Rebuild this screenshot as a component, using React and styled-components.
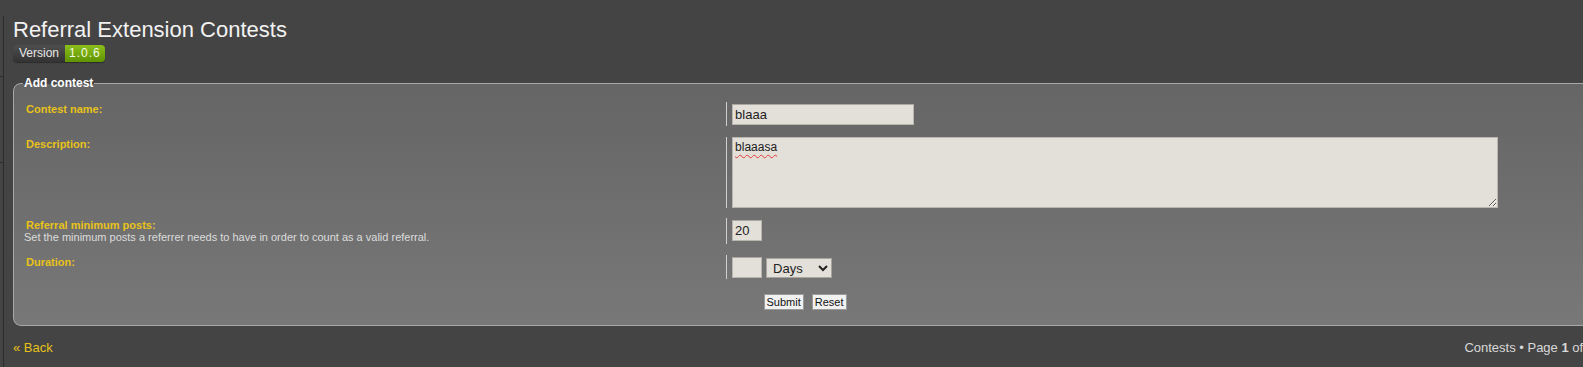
import React from "react";
import styled, { createGlobalStyle } from "styled-components";

const GlobalStyle = createGlobalStyle`
  html, body {
    margin: 0;
    padding: 0;
    background: #444444;
    overflow: hidden;
    font-family: "Liberation Sans", Arial, sans-serif;
  }
`;

const Page = styled.div`
  display: flex;
  align-items: stretch;
  min-height: 367px;
`;

const LeftRail = styled.div`
  width: 3px;
  margin-top: 16px;
  border-right: 1px solid #2c2c2c;
  flex-shrink: 0;
`;

const RailItem = styled.div`
  height: ${p => p.h}px;
  border-bottom: 1px solid #2c2c2c;
`;

const Main = styled.div`
  width: 1582px;
  flex-shrink: 0;
  padding-left: 9px;
`;

const Title = styled.h1`
  margin: 0;
  padding-top: 17px;
  font-size: 22px;
  font-weight: normal;
  line-height: 26px;
  color: #f2f2f2;
`;

const Badge = styled.div`
  display: inline-flex;
  margin-top: 2px;
  height: 17px;
  border-radius: 4px;
  overflow: hidden;
  font-size: 12px;
  line-height: 17px;
  box-shadow: 0 1px 1px rgba(0, 0, 0, 0.35);
`;

const BadgePart = styled.span`
  padding: 0 ${p => (p.green ? 4 : 6)}px;
  color: ${p => (p.green ? "#f4f9e4" : "#e6e6e6")};
  letter-spacing: ${p => (p.green ? "1px" : "0")};
  background: ${p =>
    p.green
      ? "linear-gradient(#8cbf1c, #5f9400)"
      : "linear-gradient(#4e4e4e, #333333)"};
`;

const Fieldset = styled.fieldset`
  margin: 14px 0 0 0;
  padding: 12px 10px 15px 12px;
  border: 1px solid #a8a8a8;
  border-radius: 8px;
  background: linear-gradient(#656565, #787878);
`;

const Legend = styled.legend`
  padding: 0 1px;
  margin-left: -3px;
  font-size: 12px;
  font-weight: bold;
  color: #ffffff;
`;

const Row = styled.div`
  display: grid;
  grid-template-columns: calc(45% - 1px) 1fr;
  margin-bottom: ${p => p.gap ?? 11}px;
`;

const Term = styled.div`
  padding-top: 1px;
`;

const Label = styled.label`
  display: block;
  font-size: 11px;
  font-weight: bold;
  color: #e8c21a;
`;

const Explain = styled.span`
  display: block;
  margin-left: -2px;
  font-size: 11px;
  color: #dcdcdc;
`;

const Value = styled.div`
  display: flex;
  align-items: flex-start;
  gap: 4px;
  border-left: 1px solid #cfcfcf;
  padding: ${p => p.pad ?? "2px 0 1px 5px"};
`;

const TextInput = styled.input`
  box-sizing: border-box;
  width: ${p => p.w}px;
  height: 21px;
  padding: 0 2px;
  border: 1px solid #b9b6b0;
  border-top-color: #aaa7a1;
  background: #e3dfd9;
  color: #222;
  font-family: "Liberation Sans", Arial, sans-serif;
  font-size: 13px;
  outline: none;
`;

const TextArea = styled.textarea`
  box-sizing: border-box;
  width: 766px;
  height: 71px;
  padding: 2px;
  border: 1px solid #b9b6b0;
  background: #e3dfd9;
  color: #222;
  font-family: "Liberation Sans", Arial, sans-serif;
  font-size: 12px;
  outline: none;
  text-decoration: underline wavy #e23b3b;
  text-decoration-thickness: 1px;
  text-underline-offset: 3px;
`;

const Select = styled.select`
  box-sizing: border-box;
  width: 66px;
  height: 20px;
  margin-top: 1px;
  padding: 0 2px;
  border: 1px solid #a8a59f;
  border-radius: 0;
  background: #e3dfd9;
  color: #222;
  font-family: "Liberation Sans", Arial, sans-serif;
  font-size: 13px;
`;

const Buttons = styled.p`
  margin: 15px 0 0 0;
  text-align: center;
  font-size: 0;
`;

const Button = styled.button`
  margin: 0 4px;
  height: 16px;
  padding: 0 2px;
  border: 1px solid #9a9a9a;
  border-radius: 0;
  background: #f1f1f1;
  color: #111;
  font-family: "Liberation Sans", Arial, sans-serif;
  font-size: 11px;
  line-height: 14px;
`;

const Footer = styled.div`
  display: flex;
  justify-content: space-between;
  margin-top: 14px;
  font-size: 13px;
`;

const BackLink = styled.a`
  color: #e8c21a;
  text-decoration: none;
`;

const Pagination = styled.div`
  color: #d8d8d8;
  white-space: nowrap;
  padding-right: 1px;
`;

export default function App() {
  return (
    <>
      <GlobalStyle />
      <Page>
        <LeftRail>
          <RailItem h={60} />
          <RailItem h={85} />
        </LeftRail>
        <Main>
          <Title>Referral Extension Contests</Title>
          <Badge>
            <BadgePart>Version</BadgePart>
            <BadgePart green>1.0.6</BadgePart>
          </Badge>
          <Fieldset>
            <Legend>Add contest</Legend>
            <Row>
              <Term>
                <Label>Contest name:</Label>
              </Term>
              <Value>
                <TextInput w={182} defaultValue="blaaa" />
              </Value>
            </Row>
            <Row gap={10}>
              <Term>
                <Label>Description:</Label>
              </Term>
              <Value pad="0 0 0 5px">
                <TextArea defaultValue="blaaasa" spellCheck={false} />
              </Value>
            </Row>
            <Row>
              <Term>
                <Label>Referral minimum posts:</Label>
                <Explain>
                  Set the minimum posts a referrer needs to have in order to
                  count as a valid referral.
                </Explain>
              </Term>
              <Value pad="2px 0 3px 5px">
                <TextInput w={30} defaultValue="20" />
              </Value>
            </Row>
            <Row gap={0}>
              <Term>
                <Label>Duration:</Label>
              </Term>
              <Value>
                <TextInput w={30} />
                <Select defaultValue="days">
                  <option value="days">Days</option>
                  <option value="weeks">Weeks</option>
                  <option value="months">Months</option>
                </Select>
              </Value>
            </Row>
            <Buttons>
              <Button type="button">Submit</Button>
              <Button type="button">Reset</Button>
            </Buttons>
          </Fieldset>
          <Footer>
            <BackLink href="#">« Back</BackLink>
            <Pagination>
              Contests • Page <strong>1</strong> of <strong>1</strong>
            </Pagination>
          </Footer>
        </Main>
      </Page>
    </>
  );
}
